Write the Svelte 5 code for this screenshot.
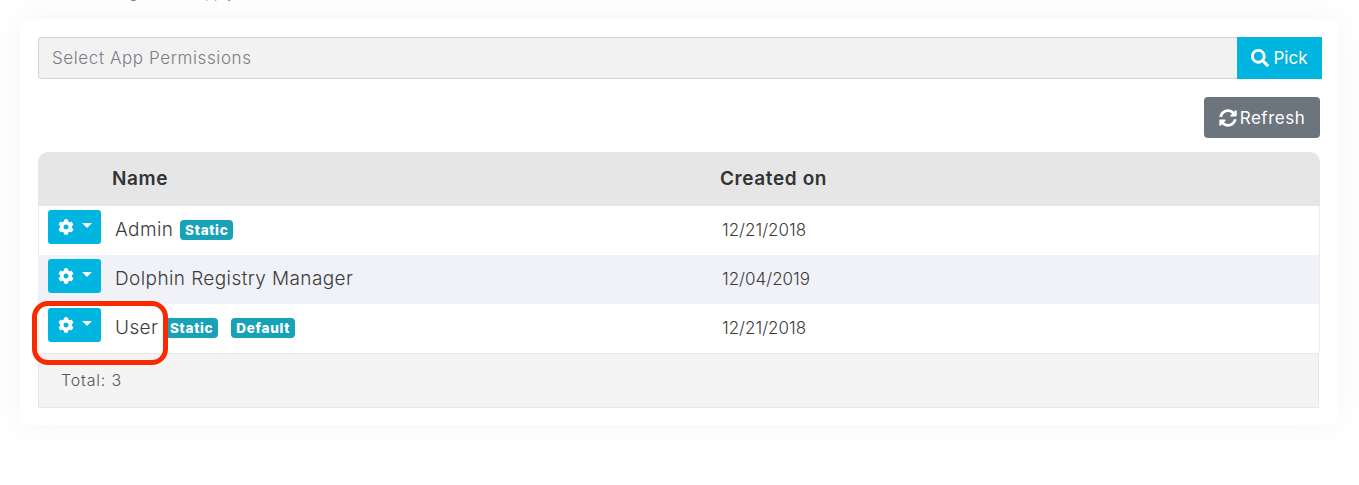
<script lang="ts">
  const roles = [
    { name: 'Admin', badges: ['Static'], created: '12/21/2018' },
    { name: 'Dolphin Registry Manager', badges: [], created: '12/04/2019' },
    { name: 'User', badges: ['Static', 'Default'], created: '12/21/2018' },
  ];
</script>

<main class="page">
  <p class="cut-text">Manage roles (apply)</p>
  <section class="card">
    <div class="picker">
      <div class="picker-input">Select App Permissions</div>
      <button class="pick">
        <svg viewBox="0 0 512 512" width="18" height="18" aria-hidden="true"><path fill="currentColor" d="M505 442.700L405.300 343c-4.500-4.500-10.600-7-17-7H372c27.600-35.300 44-79.700 44-128C416 93.100 322.900 0 208 0S0 93.100 0 208s93.100 208 208 208c48.300 0 92.700-16.400 128-44v16.300c0 6.400 2.500 12.500 7 17l99.700 99.700c9.400 9.400 24.600 9.400 33.900 0l28.300-28.300c9.400-9.400 9.400-24.600.100-34zM208 336c-70.700 0-128-57.200-128-128 0-70.700 57.200-128 128-128 70.700 0 128 57.200 128 128 0 70.700-57.200 128-128 128z"/></svg>
        Pick
      </button>
    </div>

    <div class="actions">
      <button class="refresh">
        <svg viewBox="0 0 512 512" width="18" height="18" aria-hidden="true"><path fill="currentColor" d="M370.720 133.280C339.458 104.008 298.888 87.962 255.848 88c-77.458.068-144.328 53.178-162.791 126.850-1.344 5.363-6.122 9.150-11.651 9.150H24.103c-7.498 0-13.194-6.807-11.807-14.176C33.933 94.924 134.813 8 256 8c66.448 0 126.791 26.136 171.315 68.685L463.030 40.970C478.149 25.851 504 36.559 504 57.941V192c0 13.255-10.745 24-24 24H345.941c-21.382 0-32.090-25.851-16.971-40.971l41.750-41.749zM32 296h134.059c21.382 0 32.090 25.851 16.971 40.971l-41.750 41.750c31.262 29.273 71.835 45.319 114.876 45.280 77.418-.070 144.315-53.144 162.787-126.849 1.344-5.363 6.122-9.150 11.651-9.150h57.304c7.498 0 13.194 6.807 11.807 14.176C478.067 417.076 377.187 504 256 504c-66.448 0-126.791-26.136-171.315-68.685L48.970 471.030C33.851 486.149 8 475.441 8 454.059V320c0-13.255 10.745-24 24-24z"/></svg>
        Refresh
      </button>
    </div>

    <div class="table">
      <div class="row head">
        <div class="col-action"></div>
        <div class="col-name">Name</div>
        <div class="col-date">Created on</div>
      </div>
      {#each roles as role, i}
        <div class="row" class:striped={i === 1}>
          <div class="col-action">
            <button class="gear" aria-label="Actions">
              <svg viewBox="0 0 512 512" width="16" height="16" aria-hidden="true"><path fill="currentColor" d="M487.400 315.700l-42.600-24.600c4.300-23.200 4.300-47 0-70.200l42.600-24.600c4.900-2.800 7.100-8.600 5.500-14-11.100-35.600-30-67.800-54.700-94.600-3.800-4.100-10-5.100-14.800-2.300L380.800 110c-17.900-15.400-38.500-27.300-60.800-35.100V25.800c0-5.600-3.900-10.500-9.400-11.700-36.700-8.200-74.300-7.800-109.200 0-5.500 1.200-9.400 6.100-9.400 11.700V75c-22.200 7.900-42.800 19.800-60.800 35.100L88.700 85.500c-4.900-2.800-11-1.900-14.800 2.300-24.700 26.700-43.600 58.900-54.700 94.600-1.700 5.400.600 11.200 5.500 14L67.300 221c-4.300 23.200-4.300 47 0 70.200l-42.600 24.600c-4.900 2.800-7.100 8.600-5.500 14 11.100 35.600 30 67.800 54.700 94.600 3.800 4.100 10 5.100 14.800 2.300l42.600-24.600c17.900 15.400 38.500 27.300 60.800 35.100v49.200c0 5.600 3.900 10.500 9.400 11.700 36.700 8.200 74.300 7.800 109.200 0 5.500-1.200 9.400-6.100 9.400-11.700v-49.200c22.200-7.900 42.800-19.800 60.800-35.100l42.600 24.600c4.900 2.800 11 1.900 14.800-2.300 24.700-26.700 43.600-58.900 54.700-94.600 1.500-5.500-.7-11.300-5.600-14.100zM256 336c-44.100 0-80-35.900-80-80s35.900-80 80-80 80 35.900 80 80-35.900 80-80 80z"/></svg>
              <span class="caret"></span>
            </button>
          </div>
          <div class="col-name cell">
            <span class="role">{role.name}</span>
            {#each role.badges as badge}<span class="badge">{badge}</span>{/each}
          </div>
          <div class="col-date cell">{role.created}</div>
        </div>
      {/each}
      <div class="footer">Total: {roles.length}</div>
    </div>

    <div class="callout"></div>
  </section>
</main>

<style>
  :global(body) { margin: 0; background: #fff; }
  .page {
    height: 485px;
    box-sizing: border-box;
    overflow: hidden;
    padding: 0 21px 0 20px;
    font-family: Inter, "Open Sans", sans-serif;
    font-weight: 300;
    color: #3f4254;
  }
  .cut-text {
    margin: -17px 0 0;
    padding-left: 71px;
    height: 36px;
    line-height: 20px;
    font-size: 14px;
    letter-spacing: 0.6px;
    color: #6c6f80;
  }
  .card {
    position: relative;
    height: 406px;
    box-sizing: border-box;
    padding: 18px;
    background: #fff;
    border-radius: 10px;
    box-shadow: 0 0 30px rgba(82, 63, 105, 0.06);
  }
  .picker { display: flex; height: 42px; margin-right: -2px; }
  .picker-input {
    flex: 1;
    box-sizing: border-box;
    padding-left: 13px;
    line-height: 40px;
    font-size: 17px;
    letter-spacing: 0.6px;
    color: #7a7d85;
    background: #f2f2f2;
    border: 1px solid #d2d4dc;
    border-right: 0;
    border-radius: 4px 0 0 4px;
  }
  button {
    display: flex;
    align-items: center;
    justify-content: center;
    border: 0;
    padding: 0;
    color: #fff;
    font: 400 17px Inter, "Open Sans", sans-serif;
  }
  .pick { width: 85px; gap: 4px; background: #00b5e0; }
  .actions { display: flex; justify-content: flex-end; margin: 18px 0 14px; }
  .refresh { width: 116px; height: 41px; gap: 3px; background: #6c757d; border-radius: 4px; letter-spacing: 0.5px; }
  .row {
    display: flex;
    height: 49px;
    box-sizing: border-box;
    padding-bottom: 2px;
    align-items: center;
    background: #fff;
    border-left: 1px solid #ececec;
    border-right: 1px solid #ececec;
    font-size: 19px;
    letter-spacing: 0.4px;
    color: #3b3b3b;
  }
  .row.striped { background: #f1f2f8; }
  .row.head {
    height: 54px;
    background: #e6e6e6;
    border: 0;
    border-radius: 10px 10px 0 0;
    font-weight: 600;
    color: #333;
    letter-spacing: 0.6px;
  }
  .col-action { width: 74px; padding-left: 9px; flex: none; box-sizing: border-box; align-self: flex-start; }
  .col-name { width: 607px; flex: none; box-sizing: border-box; }
  .cell { padding-left: 2px; }
  .col-date { flex: 1; }
  .col-date.cell { font-size: 17px; letter-spacing: 0; }
  .head .col-date { padding-left: 1px; }
  .gear {
    width: 53px;
    height: 34px;
    margin-top: 4px;
    gap: 8px;
    background: #00b5e0;
    border-radius: 3px;
  }
  .head .col-action { align-self: auto; }
  .caret {
    border-top: 5px solid #fff;
    border-left: 5px solid transparent;
    border-right: 5px solid transparent;
    margin-bottom: 3px;
  }
  .badge {
    display: inline-block;
    margin-left: 1px;
    padding: 0 5px;
    height: 20px;
    line-height: 20px;
    vertical-align: 1px;
    border-radius: 4px;
    background: #17a2b8;
    color: #fff;
    font-size: 13.5px;
    font-weight: 800;
    letter-spacing: 0.7px;
  }
  .badge + .badge { margin-left: 13px; }
  .footer {
    height: 55px;
    margin-right: 1px;
    box-sizing: border-box;
    padding: 15px 22px;
    font-size: 16px;
    letter-spacing: 0.8px;
    line-height: 22px;
    color: #555;
    background: #f4f4f4;
    border: 1px solid #e8e8e8;
  }
  .callout {
    position: absolute;
    left: 12px;
    top: 282px;
    width: 136px;
    height: 64px;
    box-sizing: border-box;
    border: 5px solid #fa2a00;
    border-radius: 16px;
    pointer-events: none;
  }
</style>
